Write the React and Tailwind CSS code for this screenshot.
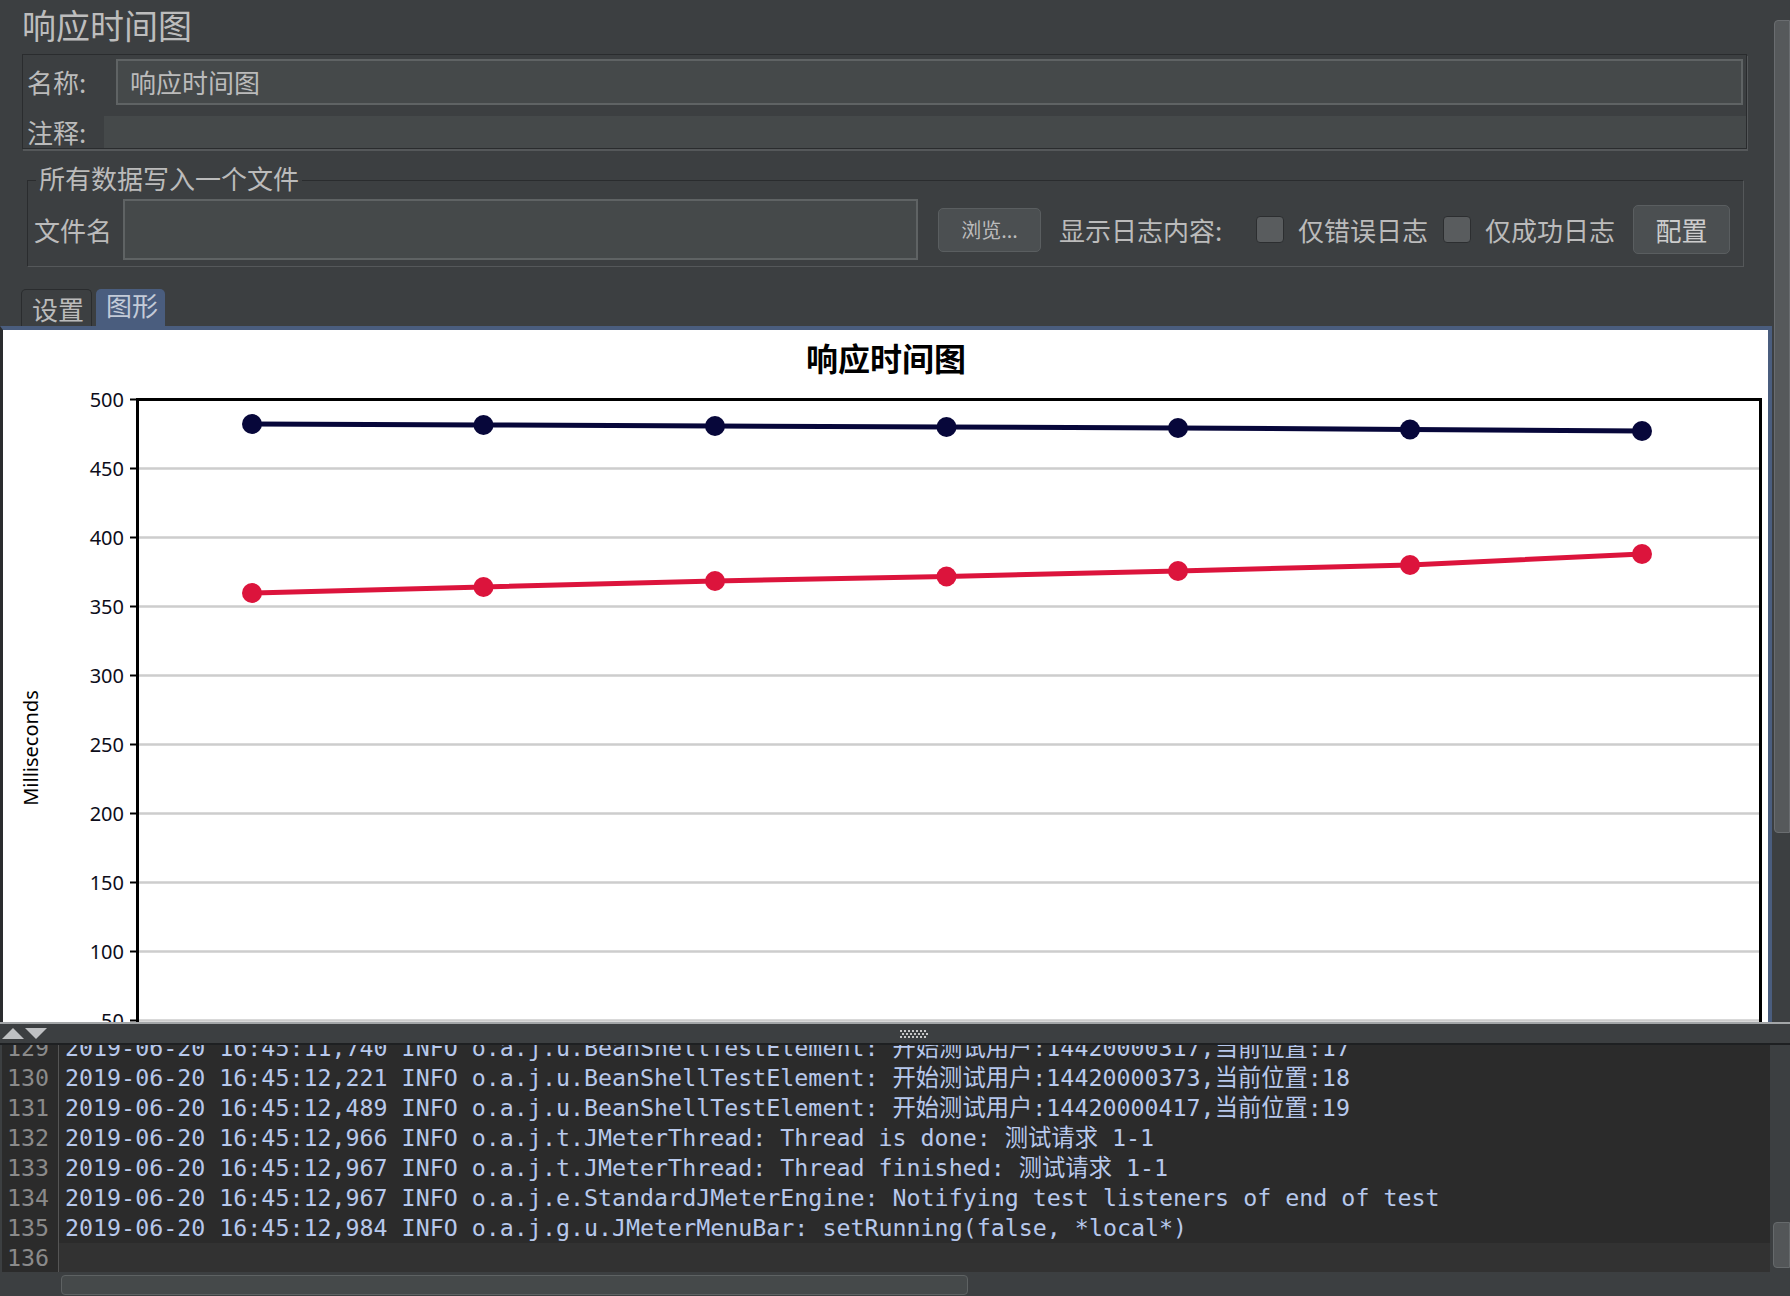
import React from "react";

const UI = { fontFamily: '"Noto Sans CJK SC", "Noto Sans", sans-serif' };
const MONO = { fontFamily: '"DejaVu Sans Mono", "Noto Sans CJK SC", monospace' };

const yv = (v) => 399.5 + (500 - v) * 1.38;
const XS = [252, 483.5, 715, 946.5, 1178, 1410, 1642];
const DARK = [424, 425, 426, 427, 428, 429.5, 431];
const RED = [593, 587, 581, 576.5, 571, 565, 554];
const TICKS = [500, 450, 400, 350, 300, 250, 200, 150, 100, 50];

function Chart() {
  const pts = (ys) => XS.map((x, i) => `${x},${ys[i]}`).join(" ");
  return (
    <svg width="1765" height="692" viewBox="3 330 1765 692" className="block">
      <text x="886" y="371" textAnchor="middle" fontSize="32" fontWeight="700" fill="#000" style={UI}>
        响应时间图
      </text>
      <text
        x="38"
        y="748"
        transform="rotate(-90 38 748)"
        textAnchor="middle"
        fontSize="20"
        fill="#000"
        style={{ fontFamily: '"Noto Sans", sans-serif' }}
      >
        Milliseconds
      </text>
      {TICKS.map((v) => (
        <g key={v}>
          {v < 500 && <line x1="139" x2="1759" y1={yv(v)} y2={yv(v)} stroke="#cdcdcd" strokeWidth="2.5" />}
          <line x1="130" x2="137" y1={yv(v)} y2={yv(v)} stroke="#000" strokeWidth="2" />
          <text
            x="124"
            y={yv(v) + 7}
            textAnchor="end"
            fontSize="20"
            fill="#0d0d1a"
            style={{ fontFamily: '"Noto Sans", sans-serif' }}
          >
            {v}
          </text>
        </g>
      ))}
      <line x1="136" x2="1762" y1="399.5" y2="399.5" stroke="#000" strokeWidth="3" />
      <line x1="137.5" x2="137.5" y1="398" y2="1030" stroke="#000" strokeWidth="3" />
      <line x1="1760.5" x2="1760.5" y1="398" y2="1030" stroke="#000" strokeWidth="3" />
      <polyline points={pts(DARK)} fill="none" stroke="#07073a" strokeWidth="5" />
      {XS.map((x, i) => (
        <circle key={"d" + i} cx={x} cy={DARK[i]} r="10" fill="#07073a" />
      ))}
      <polyline points={pts(RED)} fill="none" stroke="#dc143c" strokeWidth="5" />
      {XS.map((x, i) => (
        <circle key={"r" + i} cx={x} cy={RED[i]} r="10" fill="#dc143c" />
      ))}
    </svg>
  );
}

const LOG = [
  ["129", "2019-06-20 16:45:11,740 INFO o.a.j.u.BeanShellTestElement: 开始测试用户:14420000317,当前位置:17"],
  ["130", "2019-06-20 16:45:12,221 INFO o.a.j.u.BeanShellTestElement: 开始测试用户:14420000373,当前位置:18"],
  ["131", "2019-06-20 16:45:12,489 INFO o.a.j.u.BeanShellTestElement: 开始测试用户:14420000417,当前位置:19"],
  ["132", "2019-06-20 16:45:12,966 INFO o.a.j.t.JMeterThread: Thread is done: 测试请求 1-1"],
  ["133", "2019-06-20 16:45:12,967 INFO o.a.j.t.JMeterThread: Thread finished: 测试请求 1-1"],
  ["134", "2019-06-20 16:45:12,967 INFO o.a.j.e.StandardJMeterEngine: Notifying test listeners of end of test"],
  ["135", "2019-06-20 16:45:12,984 INFO o.a.j.g.u.JMeterMenuBar: setRunning(false, *local*)"],
  ["136", ""],
];

function Checkbox() {
  return <div className="w-[28px] h-[27px] rounded-[4px] bg-[#595c5e] border border-[#2c2e30]" />;
}

export default function App() {
  return (
    <div className="w-[1790px] h-[1296px] bg-[#3c3f41] flex flex-col overflow-hidden text-[#bbbbbb]" style={UI}>
      <div className="h-[1022px] flex">
        <div className="w-[1772px] flex flex-col">
          <div className="h-[54px] pl-[22px] text-[34px] leading-[50px] text-[#bdbdbd]">响应时间图</div>

          <div className="ml-[22px] w-[1725px] h-[95px] border border-[#2a2c2e] shadow-[1px_2px_0_#55585a] flex flex-col">
            <div className="flex items-center mt-[4px] h-[46px]">
              <div className="w-[93px] pl-[4px] text-[26px] leading-[30px]">名称:</div>
              <div className="w-[1627px] h-[46px] border-2 border-[#5f6364] bg-[#45494a] pl-[12px] text-[26px] leading-[42px]">
                响应时间图
              </div>
            </div>
            <div className="flex items-center mt-[11px] h-[32px]">
              <div className="w-[81px] pl-[4px] text-[26px] leading-[30px]">注释:</div>
              <div className="flex-1 h-[32px] bg-[#45494a]" />
            </div>
          </div>

          <div className="mt-[18px] ml-[27px] w-[1717px] relative pt-[13px]">
            <div className="border border-[#2a2c2e] border-r-[#55585a] border-b-[#55585a] pt-[12px]">
              <div className="flex items-center pt-[6px] pb-[6px]">
                <div className="w-[95px] pl-[6px] text-[26px] leading-[30px]">文件名</div>
                <div className="w-[795px] h-[61px] border-2 border-[#5f6364] bg-[#45494a]" />
                <div className="ml-[20px] w-[103px] h-[44px] rounded-[5px] border border-[#5a5e60] bg-[#4b4f51] flex items-center justify-center text-[20px] leading-[24px]">
                  浏览...
                </div>
                <div className="ml-[18px] w-[197px] text-[26px] leading-[30px] whitespace-nowrap">显示日志内容:</div>
                <Checkbox />
                <div className="ml-[14px] w-[145px] text-[26px] leading-[30px] whitespace-nowrap">仅错误日志</div>
                <Checkbox />
                <div className="ml-[14px] w-[148px] text-[26px] leading-[30px] whitespace-nowrap">仅成功日志</div>
                <div className="w-[97px] h-[49px] rounded-[5px] border border-[#5a5e60] bg-[#4b4f51] flex items-center justify-center text-[26px] leading-[30px] text-[#cccccc]">
                  配置
                </div>
              </div>
            </div>
            <div className="absolute left-[9px] top-[-2px] px-[3px] bg-[#3c3f41] text-[26px] leading-[26px]">所有数据写入一个文件</div>
          </div>

          <div className="flex items-end mt-[22px] h-[37px] pl-[21px]">
            <div className="w-[71px] h-[37px] border border-b-0 border-[#2a2c2e] rounded-t-[5px] pl-[10px] pt-[5px] text-[26px] leading-[28px]">
              设置
            </div>
            <div className="ml-[4px] w-[69px] h-[37px] bg-[#4a5d7e] rounded-t-[5px] pl-[10px] pt-[2px] text-[26px] leading-[28px] text-[#c3cbd8]">
              图形
            </div>
          </div>

          <div className="flex-1 border-t-4 border-r-4 border-l-[3px] border-[#4a5d7e] border-l-[#2a2c2e] bg-white overflow-hidden">
            <Chart />
          </div>
        </div>
        <div className="w-[18px] pl-[2px]">
          <div className="mt-[20px] h-[813px] w-[16px] bg-[#56595b] border border-[#6a6d70] rounded-l-[4px]" />
        </div>
      </div>

      <div className="h-[23px] border-t-2 border-t-[#a3a6a8] border-b-2 border-b-[#1e2022] flex items-start relative">
        <svg width="50" height="19" viewBox="0 0 50 19" className="block">
          <polygon points="2,15 13,4 24,15" fill="#bfc1c3" />
          <polygon points="25,4 47,4 36,15" fill="#bfc1c3" />
        </svg>
        <svg width="30" height="8" viewBox="0 0 30 8" className="absolute left-[900px] top-[6px]">
          <path d="M0 0h2v2H0zM4 0h2v2H4zM8 0h2v2H8zM12 0h2v2h-2zM16 0h2v2h-2zM20 0h2v2h-2zM24 0h2v2h-2zM2 3h2v2H2zM6 3h2v2H6zM10 3h2v2h-2zM14 3h2v2h-2zM18 3h2v2h-2zM22 3h2v2h-2zM26 3h2v2h-2zM0 6h2v2H0zM4 6h2v2H4zM8 6h2v2H8zM12 6h2v2h-2zM16 6h2v2h-2zM20 6h2v2h-2zM24 6h2v2h-2z" fill="#c8c8c8" />
        </svg>
      </div>

      <div className="h-[251px] flex flex-col">
        <div className="h-[227px] flex">
          <div className="w-[1770px] pl-[2px] overflow-hidden">
            <div className="h-full bg-[#2b2b2b] overflow-hidden">
              <div className="-mt-[12px]" style={MONO}>
                {LOG.map(([n, t]) => (
                  <div key={n} className="flex h-[30px]">
                    <div className="w-[57px] pr-[9px] text-right border-r border-[#555555] text-[#8a8a8a] text-[23.3px] leading-[30px]">
                      {n}
                    </div>
                    <div
                      className={
                        n === "136"
                          ? "flex-1 pl-[6px] whitespace-pre text-[23.3px] leading-[30px] text-[#b7c8ec] bg-[#323232]"
                          : "flex-1 pl-[6px] whitespace-pre text-[23.3px] leading-[30px] text-[#b7c8ec]"
                      }
                    >
                      {t}
                    </div>
                  </div>
                ))}
              </div>
            </div>
          </div>
          <div className="w-[20px] pl-[3px]">
            <div className="mt-[177px] h-[46px] w-[17px] bg-[#535658] border border-[#666a6c] rounded-l-[4px]" />
          </div>
        </div>
        <div className="h-[24px] pl-[61px] pt-[3px]">
          <div className="w-[907px] h-[20px] bg-[#45494a] border border-[#5e6263] rounded-[4px]" />
        </div>
      </div>
    </div>
  );
}
